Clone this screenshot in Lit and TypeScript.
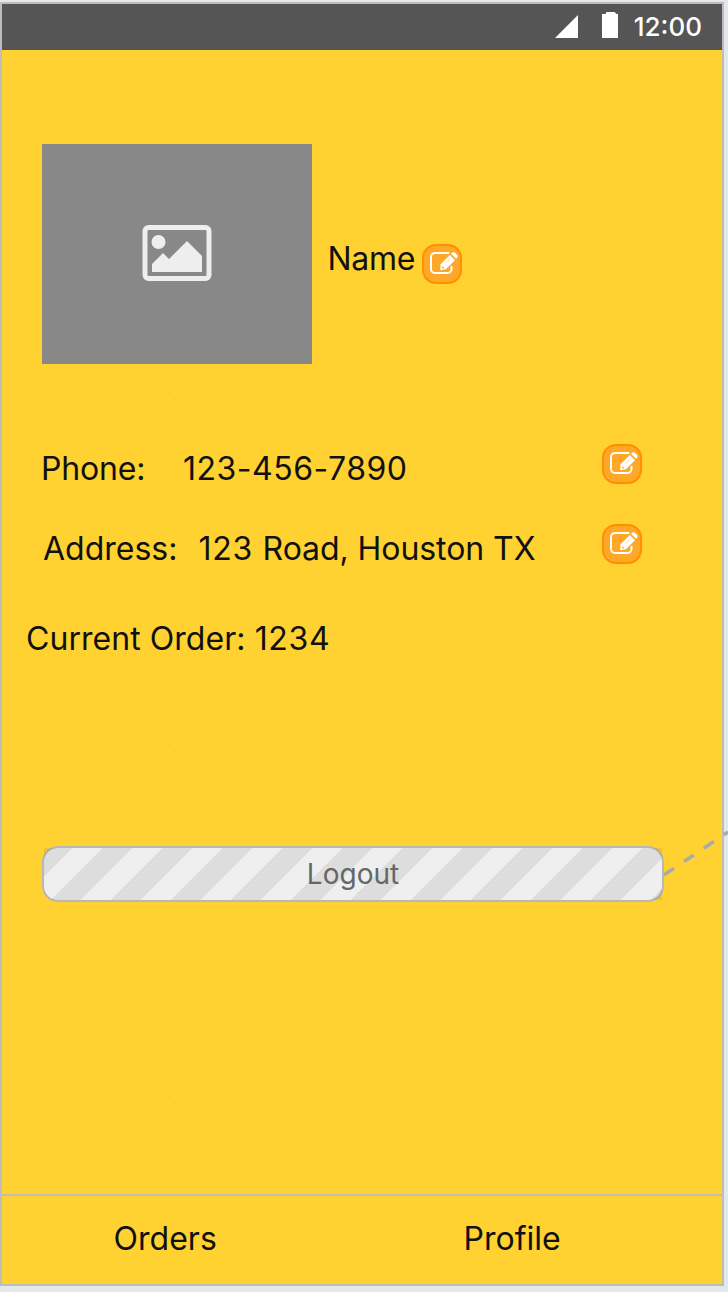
import { LitElement, html, css } from "lit";
import { customElement } from "lit/decorators.js";

@customElement("edit-button")
class EditButton extends LitElement {
  static styles = css`
    :host { display: block; width: 40px; height: 40px; flex: none; }
    button { display: block; box-sizing: border-box; width: 40px; height: 40px; padding: 0; border: 2px solid #ff8f00; border-radius: 14px; background: #ffa726; }
    svg { display: block; width: 36px; height: 36px; }
  `;
  render() {
    return html`<button aria-label="Edit">
      <svg viewBox="2 2 36 36" fill="none">
        <path d="M26.5 9H13a4 4 0 0 0-4 4v12a4 4 0 0 0 4 4h12.5a4 4 0 0 0 4-4v-2.2" stroke="#fff" stroke-width="2" stroke-linecap="round"/>
        <path d="M27.8 11 33 16.2 23.8 25.2 18.2 26.2 18.6 20.2Z" fill="#fff"/>
        <path d="M29 9.8l1.3-1.2q1.2-1 2.4 0l2.5 2.5q1 1.2 0 2.4l-1.2 1.2Z" fill="#fff"/>
        <path d="M20 22.6l1.8 1.8" stroke="#ffa726" stroke-width="1.3"/>
        <path d="M23.6 19.6l4.6-4.6" stroke="#ffa726" stroke-width="0.6" opacity="0.7"/>
      </svg>
    </button>`;
  }
}

@customElement("app-root")
class AppRoot extends LitElement {
  static styles = css`
    :host { display: block; position: relative; box-sizing: border-box; width: 728px; height: 1292px; padding-top: 2px; overflow: hidden; background: #e3e8eb; font-family: Inter, "Liberation Sans", sans-serif; font-size: 32px; line-height: 40px; color: #111; }
    .screen { box-sizing: border-box; width: 724px; height: 1284px; border: 2px solid #bdbdbd; background: #ffd232; display: flex; flex-direction: column; }
    .status { height: 46px; flex: none; background: #555; color: #fff; display: flex; justify-content: flex-end; box-sizing: border-box; padding-right: 20px; }
    .status svg { width: 66px; height: 46px; flex: none; margin-right: 13px; }
    .clock { font-size: 26px; font-weight: 500; line-height: 46px; }
    .content { flex: 1; padding: 94px 0 0 40px; --speck: linear-gradient(#f5c52f, #f5c52f); background: var(--speck) 172px 349px / 2px 1px no-repeat, var(--speck) 172px 701px / 2px 1px no-repeat, var(--speck) 172px 1053px / 2px 1px no-repeat; }
    .person { display: flex; height: 220px; }
    .photo { width: 270px; height: 220px; background: #888; display: grid; place-items: center; padding-bottom: 2px; box-sizing: border-box; }
    .photo svg { display: block; width: 70px; height: 56px; }
    .name { margin: 95px 8px 0 15.5px; width: 86.5px; letter-spacing: -0.3px; }
    .person edit-button { margin-top: 100px; }
    .row { display: flex; height: 40px; width: 600px; }
    .row edit-button { margin-left: auto; }
    .phone { margin-top: 80px; }
    .address { margin-top: 40px; }
    .text { padding-top: 5px; }
    .label { width: 142px; flex: none; margin-left: -1px; letter-spacing: -0.15px; }
    .number { letter-spacing: 0.5px; }
    .digits { letter-spacing: 0.7px; }
    .street { letter-spacing: -0.07px; }
    .address .label { width: 156.5px; margin-left: 0; padding-left: 1px; box-sizing: border-box; letter-spacing: 0; }
    .order { margin: 55px 0 0 -16px; letter-spacing: 0.05px; }
    .logout { display: block; box-sizing: border-box; width: 622px; height: 56px; margin: 187px 0 0; padding: 0; border: 2px solid #b8b8b8; border-radius: 16px; background: #efefef; font: 28px Inter, sans-serif; color: #666; }
    .stripes { display: grid; place-items: center; height: 52px; background: repeating-linear-gradient(135deg, rgba(0,0,0,.075) 0 20.506px, transparent 20.506px 41.719px, rgba(0,0,0,.075) 41.719px 42.426px); }
    .tabs { height: 88px; flex: none; border-top: 2px solid #bdbdbd; display: flex; line-height: 86px; }
    .tabs span { box-sizing: border-box; width: 350px; padding-left: 111.6px; }
    .link { position: absolute; left: 664px; top: 820px; width: 64px; height: 70px; }
  `;
  render() {
    return html`
      <div class="screen">
        <header class="status">
          <svg viewBox="0 0 66 46" fill="#fff"><path d="M0 34 23 11V34ZM47 10h3.5l1-2h8l2 2H63V34H47Z"/></svg>
          <span class="clock">12:00</span>
        </header>
        <main class="content">
          <section class="person">
            <div class="photo">
              <svg viewBox="0 0 70 56"><rect x="3" y="2.5" width="64" height="51" rx="3.5" fill="none" stroke="#eee" stroke-width="5"/><circle cx="16.5" cy="17" r="7" fill="#eee"/><path d="M10 47V39L21 28 27 34 45 16 60 31V47Z" fill="#eee"/></svg>
            </div>
            <span class="name">Name</span>
            <edit-button></edit-button>
          </section>
          <section class="row phone"><span class="text label">Phone:</span><span class="text number">123-456-7890</span><edit-button></edit-button></section>
          <section class="row address"><span class="text label">Address:</span><span class="text street"><span class="digits">123 </span>Road, Houston TX</span><edit-button></edit-button></section>
          <div class="order">Current Order: <span class="digits">1234</span></div>
          <button class="logout"><span class="stripes">Logout</span></button>
        </main>
        <nav class="tabs"><span>Orders</span><span>Profile</span></nav>
      </div>
      <svg class="link" viewBox="664 820 64 70"><path d="M664 875 728 832" stroke="#aaa" stroke-width="3.6" stroke-dasharray="12 12"/></svg>
    `;
  }
}
